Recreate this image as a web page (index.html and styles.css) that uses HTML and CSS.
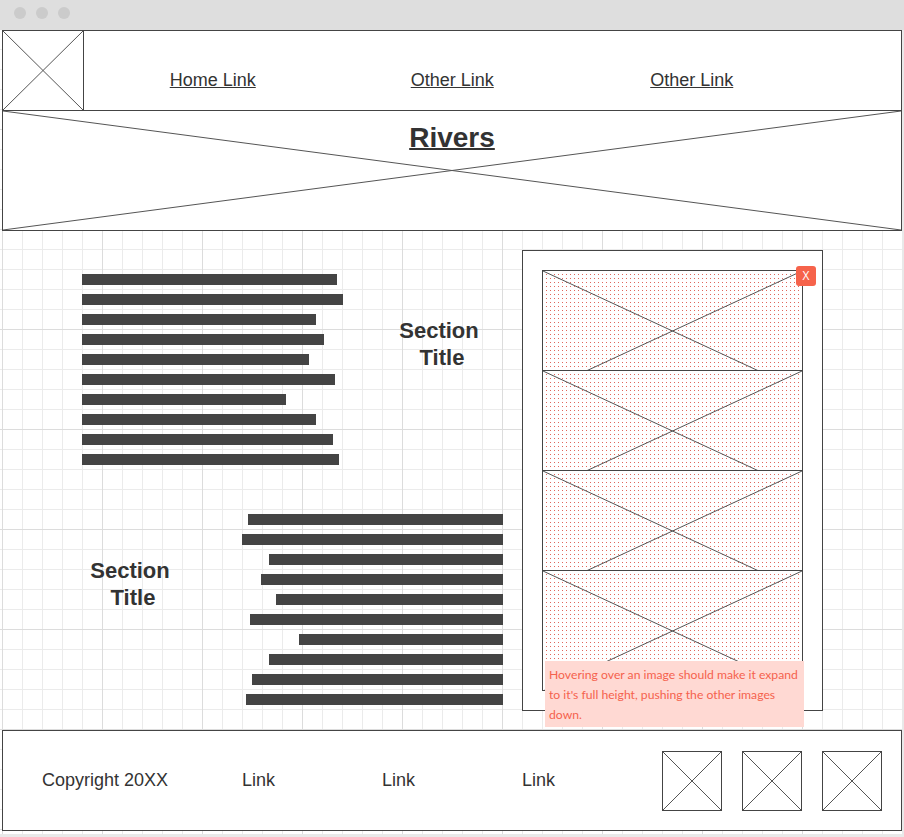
FILE: index.html
```html
<!DOCTYPE html>
<html>
<head>
<meta charset="utf-8">
<title>Rivers</title>
<link rel="stylesheet" href="styles.css">
</head>
<body>
<div class="window">
  <div class="titlebar">
    <span class="dot"></span><span class="dot"></span><span class="dot"></span>
  </div>
  <div class="canvas">
    <header class="header">
      <div class="nav">
        <div class="logo">
          <svg class="xsvg" viewBox="0 0 80 79" preserveAspectRatio="none"><line x1="0" y1="0" x2="80" y2="79"/><line x1="80" y1="0" x2="0" y2="79"/></svg>
        </div>
        <nav class="links">
          <a class="nav-link" href="#">Home Link</a>
          <a class="nav-link" href="#">Other Link</a>
          <a class="nav-link" href="#">Other Link</a>
        </nav>
      </div>
      <div class="hero">
        <svg class="hero-x" viewBox="0 0 898 119" preserveAspectRatio="none"><line x1="0" y1="0" x2="898" y2="119"/><line x1="898" y1="0" x2="0" y2="119"/></svg>
        <h1 class="hero-title">Rivers</h1>
      </div>
    </header>

    <main class="main">
      <div class="left">
        <section class="sec sec1">
          <div class="bars">
            <span class="bar" style="width:255px"></span>
            <span class="bar" style="width:261px"></span>
            <span class="bar" style="width:234px"></span>
            <span class="bar" style="width:242px"></span>
            <span class="bar" style="width:227px"></span>
            <span class="bar" style="width:253px"></span>
            <span class="bar" style="width:204px"></span>
            <span class="bar" style="width:234px"></span>
            <span class="bar" style="width:251px"></span>
            <span class="bar" style="width:257px"></span>
          </div>
          <h2 class="sec-title title1">Section<br><span class="t2">Title</span></h2>
        </section>
        <section class="sec sec2">
          <h2 class="sec-title title2">Section<br><span class="t2">Title</span></h2>
          <div class="bars bars-right">
            <span class="bar" style="width:255px"></span>
            <span class="bar" style="width:261px"></span>
            <span class="bar" style="width:234px"></span>
            <span class="bar" style="width:242px"></span>
            <span class="bar" style="width:227px"></span>
            <span class="bar" style="width:253px"></span>
            <span class="bar" style="width:204px"></span>
            <span class="bar" style="width:234px"></span>
            <span class="bar" style="width:251px"></span>
            <span class="bar" style="width:257px"></span>
          </div>
        </section>
      </div>

      <aside class="panel">
        <div class="imgs">
          <div class="slot"><svg class="slot-x" viewBox="0 0 259 120"><line x1="0" y1="0" x2="259" y2="120"/><line x1="259" y1="0" x2="0" y2="120"/></svg></div>
          <div class="slot"><svg class="slot-x" viewBox="0 0 259 120"><line x1="0" y1="0" x2="259" y2="120"/><line x1="259" y1="0" x2="0" y2="120"/></svg></div>
          <div class="slot"><svg class="slot-x" viewBox="0 0 259 120"><line x1="0" y1="0" x2="259" y2="120"/><line x1="259" y1="0" x2="0" y2="120"/></svg></div>
          <div class="slot slot-last"><svg class="slot-x" viewBox="0 0 259 120"><line x1="0" y1="0" x2="259" y2="120"/><line x1="259" y1="0" x2="0" y2="120"/></svg></div>
        </div>
        <span class="close">X</span>
        <div class="tooltip">Hovering over an image should make it expand to it's full height, pushing the other images down.</div>
      </aside>
    </main>

    <footer class="footer">
      <span class="copy">Copyright 20XX</span>
      <a class="flink">Link</a>
      <a class="flink">Link</a>
      <a class="flink">Link</a>
      <div class="fimgs">
        <div class="fimg"><svg class="xsvg" viewBox="0 0 58 58" preserveAspectRatio="none"><line x1="0" y1="0" x2="58" y2="58"/><line x1="58" y1="0" x2="0" y2="58"/></svg></div>
        <div class="fimg"><svg class="xsvg" viewBox="0 0 58 58" preserveAspectRatio="none"><line x1="0" y1="0" x2="58" y2="58"/><line x1="58" y1="0" x2="0" y2="58"/></svg></div>
        <div class="fimg"><svg class="xsvg" viewBox="0 0 58 58" preserveAspectRatio="none"><line x1="0" y1="0" x2="58" y2="58"/><line x1="58" y1="0" x2="0" y2="58"/></svg></div>
      </div>
    </footer>
  </div>
</div>
</body>
</html>
```
FILE: styles.css
```css
* { box-sizing: border-box; }
html, body { margin: 0; padding: 0; }
body {
  background: #e9e9e9;
  font-family: "Liberation Sans", Arial, sans-serif;
  color: #333;
}
.window { width: 904px; height: 837px; overflow: hidden; }

.titlebar {
  height: 30px;
  background: #dedede;
  display: flex;
  gap: 10px;
  padding: 7px 0 0 14px;
}
.dot { width: 12px; height: 12px; border-radius: 50%; background: #cbcbcb; }

.canvas {
  width: 902px;
  height: 804px;
  padding-left: 2px;
  background-color: #fff;
  background-image:
    linear-gradient(90deg, #dcdcdc 1px, transparent 1px),
    linear-gradient(#dcdcdc 1px, transparent 1px),
    linear-gradient(90deg, #ebebeb 1px, transparent 1px),
    linear-gradient(#ebebeb 1px, transparent 1px);
  background-size: 100px 100px, 100px 100px, 20px 20px, 20px 20px;
  background-position: 2px -1px;
}

.xsvg { display: block; width: 100%; height: 100%; }
.xsvg line, .hero-x line, .slot-x line { stroke: #555; stroke-width: 1; vector-effect: non-scaling-stroke; }

/* header */
.header { width: 900px; height: 201px; border: 1px solid #444; background: #fff; }
.nav { display: flex; height: 80px; border-bottom: 1px solid #444; }
.logo { width: 81px; height: 79px; border-right: 1px solid #444; }
.links { display: flex; margin-left: 9px; padding-top: 39px; }
.nav-link {
  width: 239.5px;
  text-align: center;
  font-size: 18px;
  line-height: 20px;
  color: #333;
  text-decoration: underline;
  align-self: flex-start;
}
.hero { position: relative; height: 119px; padding-top: 11px; text-align: center; }
.hero-x { position: absolute; left: 0; top: 0; width: 100%; height: 100%; }
.hero-title {
  position: relative;
  display: inline-block;
  margin: 0;
  font-size: 28px;
  line-height: 32px;
  font-weight: 700;
  color: #333;
  text-decoration: underline;
  text-decoration-thickness: 2px;
}

/* main */
.main { display: flex; height: 499px; }
.left { width: 520px; }
.sec { display: flex; align-items: flex-start; }
.sec1 { padding: 43px 0 0 80px; }
.sec2 { margin-top: 49px; padding-left: 68px; }
.bars { display: flex; flex-direction: column; gap: 9px; width: 261px; }
.bars-right { align-items: flex-end; margin-left: 52px; }
.bar { display: block; height: 11px; background: #444; }
.sec-title {
  width: 120px;
  margin: 43px 0 0;
  text-align: center;
  font-size: 22px;
  line-height: 27px;
  font-weight: 700;
  color: #333;
}
.sec-title .t2 { padding-left: 6px; }
.title1 { margin-left: 36px; }

.panel {
  position: relative;
  width: 301px;
  height: 461px;
  margin-top: 19px;
  padding: 19px;
  border: 1px solid #444;
  background: #fff;
}
.imgs { width: 261px; border: 1px solid #444; border-top: none; }
.slot {
  position: relative;
  height: 100px;
  border-top: 1px solid #444;
  overflow: hidden;
  background:
    linear-gradient(90deg, #fff 3px, transparent 3px) 0 0 / 4px 4px,
    linear-gradient(#fff 3px, transparent 3px) 0 0 / 4px 4px,
    #e0675c;
}
.slot-last { height: 120px; }
.slot-x { display: block; width: 259px; height: 120px; }

.close {
  position: absolute;
  left: 273px;
  top: 15px;
  width: 20px;
  height: 20px;
  border-radius: 3px;
  background: #f6634b;
  color: #fff;
  font-family: "Open Sans", sans-serif;
  font-size: 12px;
  line-height: 20px;
  text-align: center;
}
.tooltip {
  position: absolute;
  left: 22px;
  top: 410px;
  width: 259px;
  padding: 4px 4px 2px;
  background: #ffd9d3;
  color: #f5624d;
  font-family: "Lato", sans-serif;
  font-size: 12.2px;
  line-height: 20px;
}

/* footer */
.footer {
  display: flex;
  align-items: center;
  width: 900px;
  height: 101px;
  padding-left: 39px;
  border: 1px solid #444;
  background: #fff;
  font-size: 18px;
}
.copy { width: 200px; color: #333; }
.flink { width: 140px; color: #333; }
.fimgs { display: flex; gap: 20px; }
.fimg { width: 60px; height: 60px; border: 1px solid #444; }
```
